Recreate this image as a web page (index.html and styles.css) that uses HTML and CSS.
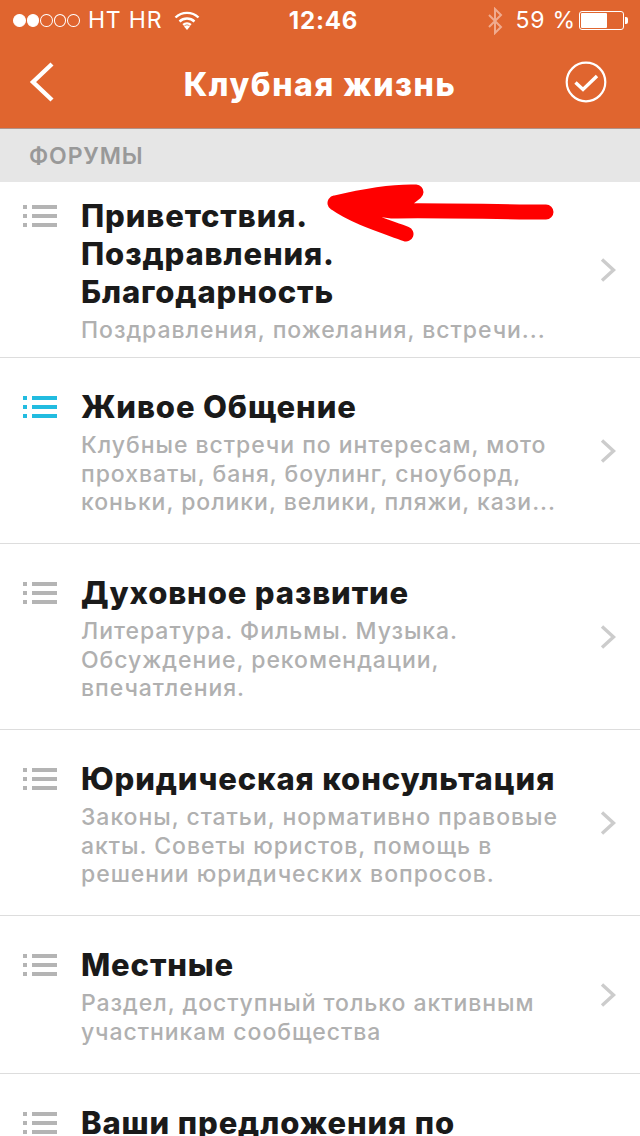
FILE: index.html
```html
<!DOCTYPE html>
<html lang="ru">
<head>
<meta charset="utf-8">
<title>Клубная жизнь</title>
<link rel="stylesheet" href="styles.css">
</head>
<body>
<svg width="0" height="0" class="defs">
  <symbol id="list" viewBox="0 0 34 22">
    <path d="M0 0h4v4H0zM9 0h25v4H9zM0 9h4v4H0zM9 9h25v4H9zM0 18h4v4H0zM9 18h25v4H9z"/>
  </symbol>
  <symbol id="chev" viewBox="0 0 16 24">
    <path d="M2 1.500 13.500 12 2 22.500" fill="none" stroke="currentColor" stroke-width="3.4"/>
  </symbol>
</svg>
<div class="page">
  <header class="top">
    <div class="status">
      <div class="status-left">
        <span class="dots"><i class="dot on"></i><i class="dot on"></i><i class="dot"></i><i class="dot"></i><i class="dot"></i></span>
        <span class="carrier">HT HR</span>
        <svg class="wifi" width="26" height="20" viewBox="0 0 26 20"><path d="M1.500 7.500a16.500 16.500 0 0 1 23 0M5.500 11.500a11 11 0 0 1 15 0M9.200 15a5.600 5.600 0 0 1 7.600 0" fill="none" stroke="#fff" stroke-width="2.4"/><path d="M13 20l-3-3.400a4.400 4.400 0 0 1 6 0z" fill="#fff"/></svg>
      </div>
      <div class="clock">12:46</div>
      <div class="status-right">
        <svg class="bt" width="16" height="28" viewBox="0 0 16 28"><path d="M2 8l12 12-6 6V2l6 6L2 20" fill="none" stroke="#f0ab8f" stroke-width="2"/></svg>
        <span class="pct">59 %</span>
        <span class="battery"><span class="battery-fill"></span></span>
        <span class="battery-tip"></span>
      </div>
    </div>
    <nav class="nav">
      <svg class="back" width="26" height="42" viewBox="0 0 26 42"><path d="M23 3 4 21l19 18" fill="none" stroke="#fff" stroke-width="4.4"/></svg>
      <h1 class="nav-title">Клубная жизнь</h1>
      <svg class="check" width="42" height="42" viewBox="0 0 42 42"><circle cx="21" cy="21" r="19.3" fill="none" stroke="#fff" stroke-width="2.2"/><path d="M10.500 21.500l7.500 7 14-13.500" fill="none" stroke="#fff" stroke-width="3.4"/></svg>
    </nav>
  </header>
  <div class="section">ФОРУМЫ</div>
  <main class="list">
    <article class="row row-first">
      <svg class="ico"><use href="#list"/></svg>
      <div class="body">
        <h2 class="title">Приветствия.<br>Поздравления.<br>Благодарность</h2>
        <p class="sub">Поздравления, пожелания, встречи...</p>
      </div>
      <svg class="chev"><use href="#chev"/></svg>
    </article>
    <article class="row">
      <svg class="ico ico-new"><use href="#list"/></svg>
      <div class="body">
        <h2 class="title">Живое Общение</h2>
        <p class="sub">Клубные встречи по интересам, мото<br>прохваты, баня, боулинг, сноуборд,<br>коньки, ролики, велики, пляжи, кази...</p>
      </div>
      <svg class="chev"><use href="#chev"/></svg>
    </article>
    <article class="row">
      <svg class="ico"><use href="#list"/></svg>
      <div class="body">
        <h2 class="title">Духовное развитие</h2>
        <p class="sub">Литература. Фильмы. Музыка.<br>Обсуждение, рекомендации,<br>впечатления.</p>
      </div>
      <svg class="chev"><use href="#chev"/></svg>
    </article>
    <article class="row">
      <svg class="ico"><use href="#list"/></svg>
      <div class="body">
        <h2 class="title">Юридическая консультация</h2>
        <p class="sub">Законы, статьи, нормативно правовые<br>акты. Советы юристов, помощь в<br>решении юридических вопросов.</p>
      </div>
      <svg class="chev"><use href="#chev"/></svg>
    </article>
    <article class="row">
      <svg class="ico"><use href="#list"/></svg>
      <div class="body">
        <h2 class="title">Местные</h2>
        <p class="sub">Раздел, доступный только активным<br>участникам сообщества</p>
      </div>
      <svg class="chev"><use href="#chev"/></svg>
    </article>
    <article class="row">
      <svg class="ico"><use href="#list"/></svg>
      <div class="body">
        <h2 class="title">Ваши предложения по</h2>
      </div>
    </article>
  </main>
  <svg class="arrow" width="234" height="70" viewBox="0 0 234 70"><path d="M9 25C30 20 62 13 90 14L66 33C110 32 170 34 220 34M9 25C30 40 62 49 80 56M9 25 66 33" fill="#ff0000" stroke="#ff0000" stroke-width="15" stroke-linecap="round" stroke-linejoin="round"/></svg>
</div>
</body>
</html>
```
FILE: styles.css
```css
* { box-sizing: border-box; }
html, body { margin: 0; padding: 0; }
body { font-family: Inter, "Noto Sans", sans-serif; background: #fff; }
.defs { position: absolute; }
.page { position: relative; width: 640px; height: 1136px; overflow: hidden; }

.top { background: #e0652f; color: #fff; height: 129px; border-bottom: 1px solid #b0928a; }
.status { display: flex; justify-content: space-between; align-items: center; height: 40px; padding: 0 0 0 13px; position: relative; }
.status-left { display: flex; align-items: center; }
.dots { display: flex; gap: 1px; }
.dot { width: 12.6px; height: 13px; border-radius: 50%; border: 1.2px solid #fff; }
.dot.on { background: #fff; }
.carrier { font-size: 23px; font-weight: 400; margin-left: 8px; letter-spacing: 0.8px; }
.wifi { margin-left: 12px; }
.clock { position: absolute; left: 0; right: 0; padding-left: 7px; text-align: center; font-size: 24px; font-weight: 700; letter-spacing: 0.8px; }
.status-right { display: flex; align-items: center; padding-right: 12px; }
.pct { font-size: 23px; margin-left: 13px; letter-spacing: 0.8px; }
.bt { margin-top: 2px; }
.battery { width: 45px; height: 19px; border: 1px solid #fff; border-radius: 3px; padding: 1px; margin-left: 3px; display: flex; }
.battery-fill { width: 26px; background: #fff; border-radius: 1px; }
.battery-tip { width: 3px; height: 7px; background: #fff; border-radius: 0 2px 2px 0; margin-left: 1px; }

.nav { display: flex; align-items: center; justify-content: space-between; height: 88px; padding: 0 33px 4px 29px; position: relative; }
.nav-title { position: absolute; left: 0; right: 0; top: 25px; margin: 0; text-align: center; font-size: 32px; line-height: 40px; font-weight: 800; letter-spacing: 1.55px; }

.section { background: #e6e6e6; height: 53px; line-height: 54px; padding-left: 29px; font-size: 23px; font-weight: 600; letter-spacing: 0.9px; color: #999; }

.row { display: flex; align-items: center; padding: 30px 0 26.5px 23px; border-bottom: 1px solid #ddd; position: relative; }
.row-first { padding-top: 15px; padding-bottom: 12.5px; }
.ico { width: 34px; height: 22px; fill: #b4b4b4; align-self: flex-start; margin-top: 8px; flex: none; }
.ico-new { fill: #22bce0; }
.body { flex: 1; margin-left: 24px; min-width: 0; }
.title { margin: 0; font-size: 31px; line-height: 38px; font-weight: 800; letter-spacing: 0.87px; color: #1a1a1a; }
.sub { margin: 5px 0 0; font-size: 23px; line-height: 28.5px; font-weight: 500; color: #b0b0b0; letter-spacing: 0.95px; }
.chev { width: 16px; height: 24px; color: #ccc; flex: none; margin: -2px 24px 0 0; }

.arrow { position: absolute; left: 326px; top: 178px; }
```
